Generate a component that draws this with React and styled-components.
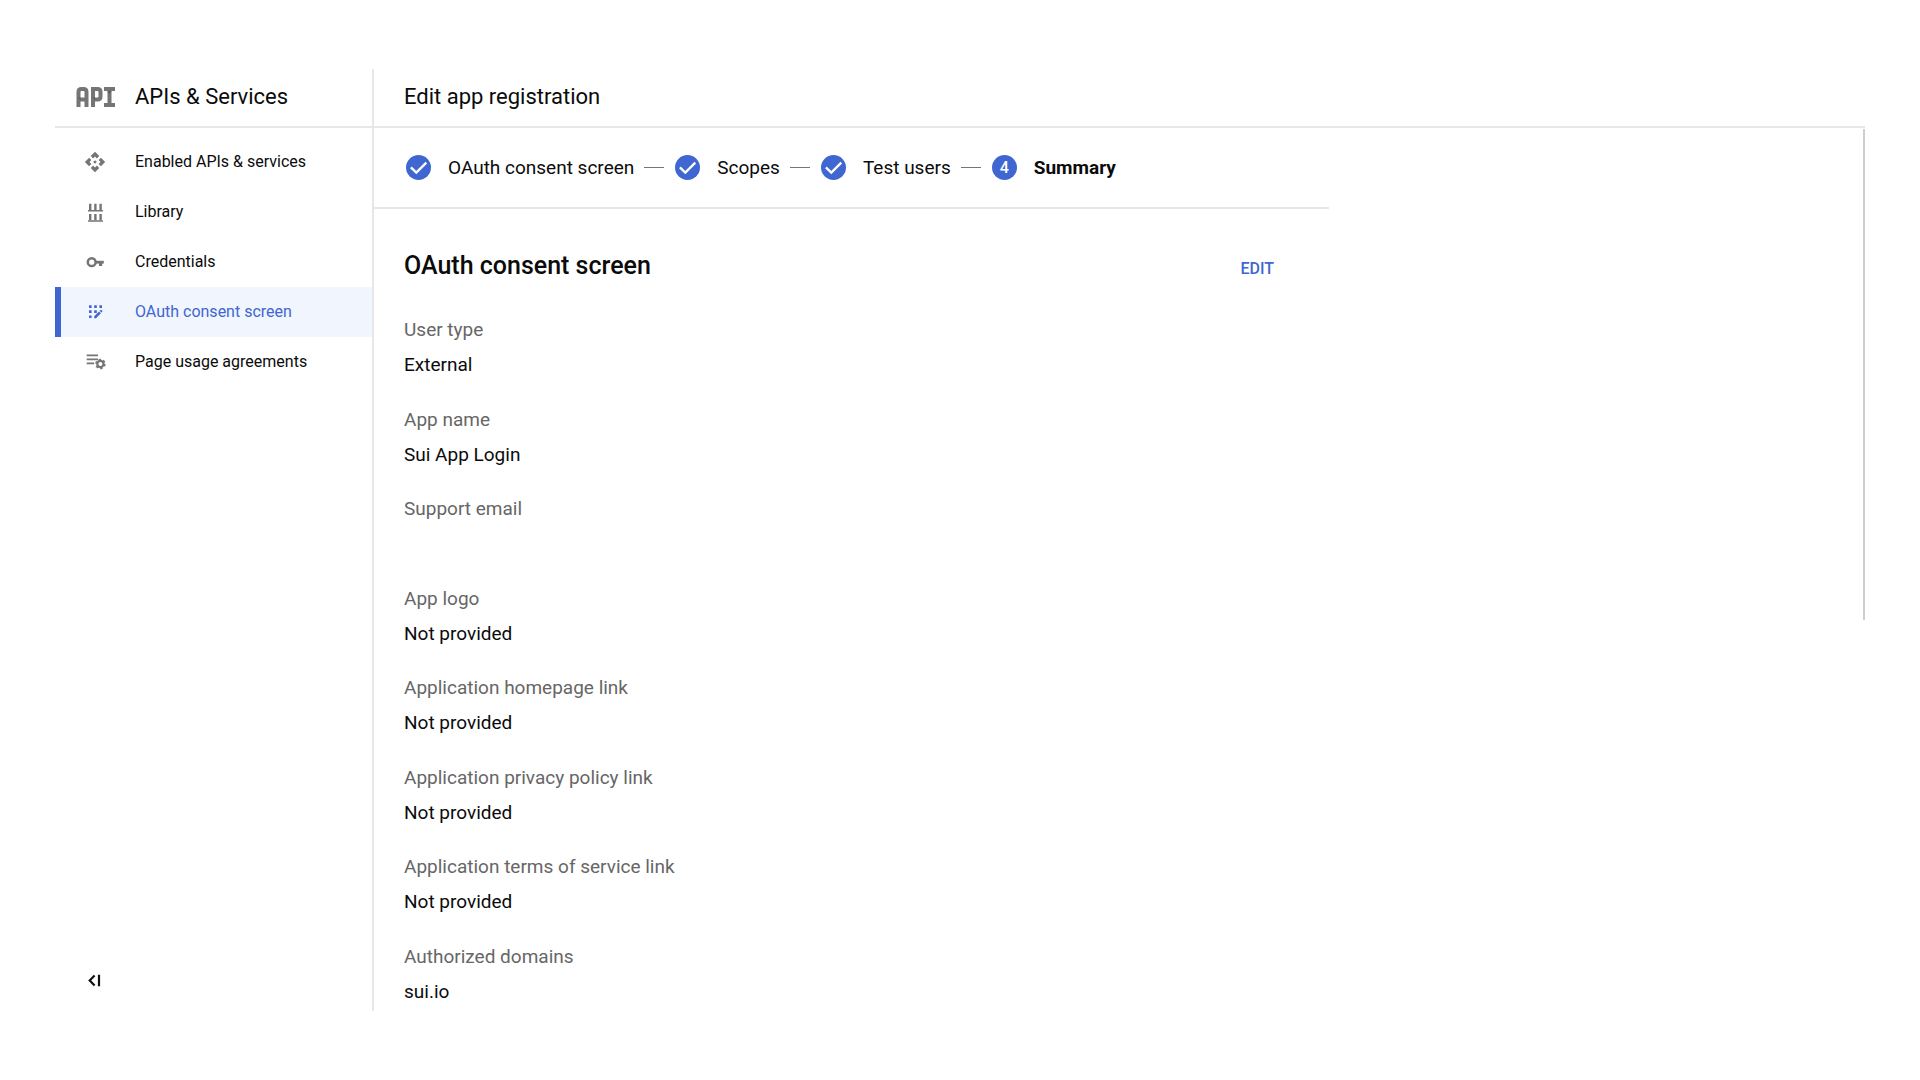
import React from "react";
import styled, { createGlobalStyle, css } from "styled-components";
import { MdApi } from "react-icons/md";

const BLUE = "#4066d1";
const GREY = "#757575";
const LINE = "#e7e7e7";

const GlobalStyle = createGlobalStyle`
  *, *::before, *::after { box-sizing: border-box; }
  body {
    margin: 0;
    background: #fff;
    color: #0b0b0b;
    font-family: Roboto, "Liberation Sans", sans-serif;
    font-size: 19px;
    line-height: 24px;
  }
  h1, h2, dl, dd, ul, ol { margin: 0; padding: 0; font-weight: 400; }
  ul, ol { list-style: none; }
`;

const Page = styled.div`
  display: flex;
  min-height: 100vh;
  padding: 69px 55px;
`;

const Sidebar = styled.aside`
  display: flex;
  flex-direction: column;
  flex: 0 0 319px;
  border-right: 2px solid ${LINE};
`;

const Bar = styled.header`
  display: flex;
  align-items: center;
  height: 59px;
  padding: 0 ${(p) => p.$inset}px 2px;
  gap: 19px;
  border-bottom: 2px solid ${LINE};
`;

const BarTitle = styled.h1`
  font-size: 22px;
  line-height: 28px;
`;

const NavList = styled.ul`
  padding-top: 9px;
`;

const NavLink = styled.a`
  display: flex;
  align-items: center;
  gap: 28px;
  height: 50px;
  padding-left: 22px;
  border-left: 6px solid transparent;
  color: inherit;
  font-size: 16px;
  text-decoration: none;

  svg { flex: none; color: ${GREY}; }

  ${(p) =>
    p.$active &&
    css`
      border-left-color: ${BLUE};
      background: #f0f5fe;
      color: ${BLUE};
      svg { color: ${BLUE}; }
    `}
`;

const CollapseButton = styled.button`
  display: flex;
  align-self: flex-start;
  margin: auto 0 18px 28px;
  padding: 0;
  border: 0;
  background: none;
  color: #111;
  cursor: pointer;
`;

const Main = styled.main`
  display: flex;
  flex: 1;
  flex-direction: column;
`;

const Body = styled.div`
  display: flex;
  flex: 1;
  justify-content: space-between;
`;

const Content = styled.div`
  display: flex;
  flex: 0 1 955px;
  flex-direction: column;
`;

const PanelEdge = styled.div`
  width: 2px;
  height: calc(100% * 5 / 9);
  margin-top: 1px;
  background: #cdcdcd;
`;

const Stepper = styled.ol`
  display: flex;
  align-items: center;
  height: 81px;
  padding-left: 32px;
  border-bottom: 2px solid ${LINE};
`;

const Step = styled.li`
  display: flex;
  align-items: center;
  font-weight: ${(p) => (p.$current ? 700 : 400)};

  &:not(:last-child)::after {
    content: "";
    width: 20px;
    height: 1px;
    margin: 0 11px 0 10px;
    background: ${GREY};
  }
`;

const StepMark = styled.span`
  display: flex;
  align-items: center;
  justify-content: center;
  width: 25px;
  height: 25px;
  margin-right: 17px;
  border-radius: 50%;
  background: ${BLUE};
  color: #fff;
  font-size: 16px;
  font-weight: 500;
`;

const SectionHead = styled.div`
  display: flex;
  align-items: center;
  justify-content: space-between;
  padding: 41px 55px 36px 30px;
`;

const SectionTitle = styled.h2`
  font-size: 25px;
  font-weight: 500;
  line-height: 32px;
`;

const EditButton = styled.button`
  padding: 6px 0 0;
  border: 0;
  background: none;
  color: ${BLUE};
  font: 500 16px/24px Roboto, "Liberation Sans", sans-serif;
  cursor: pointer;
`;

const Fields = styled.dl`
  display: flex;
  flex: 1;
  flex-direction: column;
  justify-content: space-between;
  padding: 0 30px 7px;
`;

const Label = styled.dt`
  margin-bottom: 11px;
  color: #666;
`;

const Value = styled.dd`
  min-height: 24px;
`;

const ApiLogo = () => (
  <svg width="40" height="20" viewBox="0 0 40 20" fill="none" stroke={GREY} strokeWidth="4" aria-hidden="true">
    <path d="M2.500 20V5Q2.500 2 5.500 2H7.500Q10.500 2 10.500 5V20M2.500 12.500H10.500" />
    <path d="M17 20V2H21.500Q24.500 2 24.500 5V9.500Q24.500 12.500 21.500 12.500H17" />
    <path d="M28 2H39M33.500 2V18M28 18H39" />
    <path d="M4.500 10.500l-2 0 2 3zM19 10.500l-2 0 2 3zM31.500 4h4l-2 3z" fill="#5a5a5a" stroke="none" />
  </svg>
);

const LibraryIcon = () => (
  <svg width="24" height="24" viewBox="0 0 24 24" fill="currentColor" aria-hidden="true">
    <path d="M5 10h15v1.500H5zM5 20.200h15v1.500H5z" />
    <path d="M6 3.800h2.400V10H6zM11.200 3.800h2.400V10h-2.400zM16.400 3.800h2.400V10h-2.400z" />
    <path d="M6 14h2.400v6.200H6zM11.200 14h2.400v6.200h-2.400zM16.400 14h2.400v6.200h-2.400z" />
  </svg>
);

const KeyIcon = () => (
  <svg width="24" height="24" viewBox="0 0 24 24" fill="none" stroke="currentColor" aria-hidden="true">
    <circle cx="8.700" cy="12.200" r="3.900" strokeWidth="2.500" />
    <path d="M12.500 12.200H20.800" strokeWidth="2.800" />
    <path d="M17.600 12.200V16" strokeWidth="3.200" />
  </svg>
);

const ConsentIcon = () => (
  <svg width="24" height="24" viewBox="0 0 24 24" fill="currentColor" aria-hidden="true">
    <path d="M6 5.300h2.600v2.600H6zM11.200 5.300h2.600v2.600h-2.600zM16.400 5.300H19v2.600h-2.600zM6 10.300h2.600v2.600H6zM11.200 10.300h2.600v2.600h-2.600zM6 15.400h2.600V18H6z" />
    <path d="M11.200 18.200v-1.900l4.900-4.900 1.800 1.800-4.900 5zM16.700 10.800l.9-.9q.4-.4.800 0l.9.900q.4.400 0 .8l-.9.900z" />
  </svg>
);

const AgreementIcon = () => (
  <svg width="24" height="24" viewBox="0 0 24 24" fill="none" stroke="currentColor" aria-hidden="true">
    <path d="M3.700 5.300H15M3.700 9.300H15M3.700 13.300H11.200" strokeWidth="1.700" />
    <circle cx="17.400" cy="14" r="3.100" strokeWidth="2.200" />
    <circle cx="17.400" cy="14" r="4.500" strokeWidth="1.500" strokeDasharray="2.360 2.352" />
  </svg>
);

const CollapseIcon = () => (
  <svg width="24" height="24" viewBox="0 0 24 24" fill="none" stroke="currentColor" strokeWidth="2.200" aria-hidden="true">
    <path d="M11.600 6.500L6.700 11.500L11.600 16.500M16 5.800V17.200" />
  </svg>
);

const CheckIcon = () => (
  <svg width="25" height="25" viewBox="0 0 25 25" fill="none" stroke="currentColor" strokeWidth="2.300" aria-hidden="true">
    <path d="M4.900 12.400L10.300 17.600L20.300 7.600" />
  </svg>
);

const navItems = [
  { text: "Enabled APIs & services", icon: <MdApi size={24} viewBox="-1 -1 26 26" aria-hidden="true" /> },
  { text: "Library", icon: <LibraryIcon /> },
  { text: "Credentials", icon: <KeyIcon /> },
  { text: "OAuth consent screen", icon: <ConsentIcon />, active: true },
  { text: "Page usage agreements", icon: <AgreementIcon /> },
];

const steps = ["OAuth consent screen", "Scopes", "Test users", "Summary"];

const fields = [
  ["User type", "External"],
  ["App name", "Sui App Login"],
  ["Support email", ""],
  ["App logo", "Not provided"],
  ["Application homepage link", "Not provided"],
  ["Application privacy policy link", "Not provided"],
  ["Application terms of service link", "Not provided"],
  ["Authorized domains", "sui.io"],
];

export default function App() {
  return (
    <>
      <GlobalStyle />
      <Page>
        <Sidebar>
          <Bar $inset={21}>
            <ApiLogo />
            <BarTitle as="h2">APIs &amp; Services</BarTitle>
          </Bar>
          <nav>
            <NavList>
              {navItems.map(({ text, icon, active }) => (
                <li key={text}>
                  <NavLink href="#" $active={active} aria-current={active ? "page" : undefined}>
                    {icon}
                    {text}
                  </NavLink>
                </li>
              ))}
            </NavList>
          </nav>
          <CollapseButton type="button" aria-label="Collapse">
            <CollapseIcon />
          </CollapseButton>
        </Sidebar>
        <Main>
          <Bar $inset={30}>
            <BarTitle>Edit app registration</BarTitle>
          </Bar>
          <Body>
            <Content>
              <Stepper>
                {steps.map((text, i) => {
                  const current = i === steps.length - 1;
                  return (
                    <Step key={text} $current={current} aria-current={current ? "step" : undefined}>
                      <StepMark>{current ? i + 1 : <CheckIcon />}</StepMark>
                      {text}
                    </Step>
                  );
                })}
              </Stepper>
              <SectionHead>
                <SectionTitle>OAuth consent screen</SectionTitle>
                <EditButton type="button">EDIT</EditButton>
              </SectionHead>
              <Fields>
                {fields.map(([label, value]) => (
                  <div key={label}>
                    <Label>{label}</Label>
                    <Value>{value}</Value>
                  </div>
                ))}
              </Fields>
            </Content>
            <PanelEdge />
          </Body>
        </Main>
      </Page>
    </>
  );
}
